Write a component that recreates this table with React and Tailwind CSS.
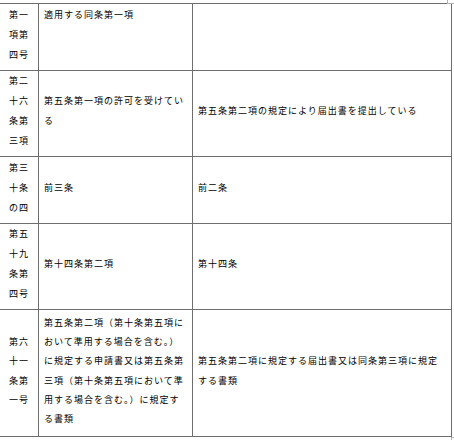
import React from "react";

const Lines = ({ lines }) => (
  <div className="whitespace-nowrap">
    {lines.map((l, i) => (
      <div key={i}>{l}</div>
    ))}
  </div>
);

const Cell = ({ children, className = "" }) => (
  <div className={`bg-white flex pb-[5px] ${className}`}>{children}</div>
);

export default function App() {
  const rows = [
    {
      h: "h-[66px]",
      lh: "leading-[20px]",
      c1: ["第一", "項第", "四号"],
      c2: ["適用する同条第一項"],
      c2top: true,
      c3: [],
    },
    {
      h: "h-[85px]",
      lh: "leading-[20px]",
      c1: ["第二", "十六", "条第", "三項"],
      c2: ["第五条第一項の許可を受けてい", "る"],
      c3: ["第五条第二項の規定により届出書を提出している"],
    },
    {
      h: "h-[66px]",
      lh: "leading-[20px]",
      c1: ["第三", "十条", "の四"],
      c2: ["前三条"],
      c3: ["前二条"],
    },
    {
      h: "h-[85px]",
      lh: "leading-[20px]",
      c1: ["第五", "十九", "条第", "四号"],
      c2: ["第十四条第二項"],
      c3: ["第十四条"],
    },
    {
      h: "h-[126px]",
      lh: "leading-[19.2px]",
      c1: ["第六", "十一", "条第", "一号"],
      c2: [
        "第五条第二項（第十条第五項に",
        "おいて準用する場合を含む。）",
        "に規定する申請書又は第五条第",
        "三項（第十条第五項において準",
        "用する場合を含む。）に規定す",
        "る書類",
      ],
      c3: ["第五条第二項に規定する届出書又は同条第三項に規定", "する書類"],
    },
  ];

  return (
    <div className="relative w-[454px] h-[440px] bg-white overflow-hidden font-['Noto_Sans_CJK_JP',sans-serif] text-[9px] tracking-[1px] text-black">
      <div className="absolute left-[447px] top-0 w-px h-[4px] bg-[#b4b4b4]" />
      <div className="absolute left-[447px] top-[3px] w-[7px] h-px bg-[#b4b4b4]" />
      <div className="absolute left-[451px] top-[437px] w-[3px] h-px bg-[#b4b4b4]" />
      <div className="absolute left-[451px] top-[437px] w-px h-[3px] bg-[#b4b4b4]" />
      <div className="mt-[3px] w-[452px] bg-[#6e6e6e] pt-px pr-px pb-px grid grid-cols-[38px_153px_258px] gap-px">
        {rows.map((r, i) => (
          <React.Fragment key={i}>
            <Cell className={`${r.h} ${r.lh} items-center pl-[9px]`}>
              <Lines lines={r.c1} />
            </Cell>
            <Cell
              className={`${r.h} ${r.lh} pl-[5px] ${
                r.c2top ? "items-start pt-px" : "items-center"
              }`}
            >
              <Lines lines={r.c2} />
            </Cell>
            <Cell className={`${r.h} ${r.lh} items-center pl-[5px]`}>
              <Lines lines={r.c3} />
            </Cell>
          </React.Fragment>
        ))}
      </div>
    </div>
  );
}
